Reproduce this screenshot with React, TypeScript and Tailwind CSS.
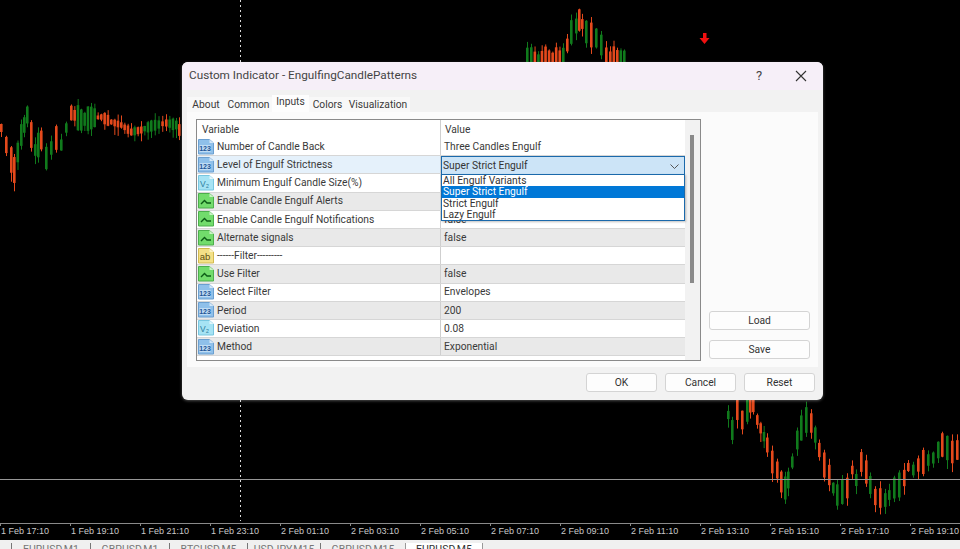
import React from "react";

type K = [number, number];
const segs: K[][] = [
  [[0,128],[5,145],[10,160],[13,170],[20,135],[26,115],[30,135],[34,150],[40,140],[45,158],[50,148],[55,138],[60,145],[65,128],[70,113],[80,120],[90,118],[100,117],[110,122],[120,125],[130,132],[140,130],[150,126],[165,123],[175,125],[181,135]],
  [[526,60],[530,59],[562,60],[566,45],[570,32],[575,26],[578,20],[581,24],[585,32],[590,35],[595,38],[600,45],[605,55],[609,59],[623,60],[628,60]],
  [[727,415],[731,430],[736,410],[741,420],[746,410],[752,402],[756,420],[766,445],[771,462],[776,470],[780,482],[784,488],[787,480],[791,462],[796,440],[800,428],[805,420],[810,423],[814,435],[818,450],[823,465],[828,475],[832,488],[836,495],[841,492],[846,488],[851,470],[855,480],[860,462],[865,472],[869,485],[874,497],[879,498],[884,500],[888,495],[893,488],[898,485],[903,478],[907,467],[912,470],[917,465],[922,462],[927,460],[932,458],[937,450],[941,445],[946,448],[951,452],[956,450],[960,449]],
];
const rnd = (n: number) => { const s = Math.sin(n * 12.9898) * 43758.5453; return s - Math.floor(s); };
const candles: { x: number; t: number; b: number; wt: number; wb: number; red: boolean }[] = [];
segs.forEach((pts, si) => {
  for (let i = 0; i < pts.length - 1; i++) {
    const [x0, y0] = pts[i]; const [x1, y1] = pts[i + 1];
    const n = Math.max(1, Math.round((x1 - x0) / 3.5));
    for (let j = 0; j < n; j++) {
      const x = x0 + ((x1 - x0) * j) / n;
      const y = y0 + ((y1 - y0) * j) / n;
      const seed = x + si * 7.3;
      const flat = si === 0 && x > 95;
      const h = flat ? 3 + rnd(seed) * 9 : 8 + rnd(seed) * 18;
      const red = y1 > y0 ? rnd(seed + 1) > 0.3 : rnd(seed + 1) > 0.7;
      candles.push({ x, t: y - h / 2, b: y + h / 2, wt: y - h / 2 - rnd(seed + 2) * 7, wb: y + h / 2 + rnd(seed + 3) * 9, red });
    }
  }
});

function Chart() {
  return (
    <svg className="w-full h-full block" viewBox="0 0 960 523" width="960" height="523">
      {candles.map((c, i) => (
        <g key={i} fill={c.red ? "#e4491c" : "#107a1c"}>
          <rect x={c.x + 1} y={c.wt} width={1} height={c.wb - c.wt} />
          <rect x={c.x} y={c.t} width={2.6} height={c.b - c.t} />
        </g>
      ))}
      <line x1="0" y1="479.500" x2="960" y2="479.500" stroke="#979797" strokeWidth="1" />
      <line x1="240.500" y1="0" x2="240.500" y2="521" stroke="#d8d8d8" strokeWidth="1" strokeDasharray="2 3" />
      <path d="M703 33h3.500v5h3l-5 6-5-6h3.500z" fill="#f01010" />
    </svg>
  );
}

function Icon({ kind }: { kind: "n" | "v" | "b" | "a" }) {
  const c = {
    n: { f: "#8fc0ea", s: "#6a9fd0", fold: "#d5e8f8" },
    v: { f: "#a6e3f4", s: "#77c6e0", fold: "#e2f6fb" },
    b: { f: "#72dc6c", s: "#4cae4c", fold: "#cbf3c6" },
    a: { f: "#f4e187", s: "#d2b94f", fold: "#fbf3c8" },
  }[kind];
  return (
    <svg width="16" height="16" viewBox="0 0 16 16" className="shrink-0">
      <path d="M0.500 0.500h11l4 3.500v11h-15z" fill={c.f} stroke={c.s} />
      <path d="M11.500 0.500v3.500h4z" fill={c.fold} />
      {kind === "n" && <rect x="1.500" y="6" width="11" height="7" fill="#eaf3fb" opacity="0.55" />}
      {kind === "n" && <text x="7" y="12" fontSize="7" fontWeight="700" textAnchor="middle" fill="#1c5596" fontFamily="Liberation Sans">123</text>}
      {kind === "v" && <text x="6.500" y="11.500" fontSize="8.500" textAnchor="middle" fill="#2d7ea0" fontFamily="Liberation Sans">V₂</text>}
      {kind === "a" && <text x="7" y="12" fontSize="9.500" textAnchor="middle" fill="#5e500f" fontFamily="Liberation Sans">ab</text>}
      {kind === "b" && <path d="M3 11 6.500 7.500l2.500 2.500h4" fill="none" stroke="#0c5c16" strokeWidth="1.400" />}
    </svg>
  );
}

const rows: { k: "n" | "v" | "b" | "a"; name: string; value: string; gray?: boolean; sel?: boolean }[] = [
  { k: "n", name: "Number of Candle Back", value: "Three Candles Engulf" },
  { k: "n", name: "Level of Engulf Strictness", value: "", sel: true },
  { k: "v", name: "Minimum Engulf Candle Size(%)", value: "" },
  { k: "b", name: "Enable Candle Engulf Alerts", value: "", gray: true },
  { k: "b", name: "Enable Candle Engulf Notifications", value: "false" },
  { k: "b", name: "Alternate signals", value: "false", gray: true },
  { k: "a", name: "------Filter---------", value: "" },
  { k: "b", name: "Use Filter", value: "false", gray: true },
  { k: "n", name: "Select Filter", value: "Envelopes" },
  { k: "n", name: "Period", value: "200", gray: true },
  { k: "v", name: "Deviation", value: "0.08" },
  { k: "n", name: "Method", value: "Exponential", gray: true },
];

const btn = "h-[19px] rounded-[3px] bg-[#fdfdfd] border border-[#d4d4d4] text-[#333] flex items-center justify-center text-[10.250px]";

function Dialog() {
  return (
    <div className="absolute left-[182px] top-[62px] w-[641px] h-[338px] rounded-[6px] overflow-hidden bg-[#f2f2f2] flex flex-col text-[#3a3a3a] text-[10.250px] shadow-[0_1px_3px_rgba(255,255,255,0.3)] font-['Roboto',sans-serif]">
      <div className="h-[28px] shrink-0 bg-[#f6eff8] flex items-center pl-[7px] text-[11.750px] text-[#444]">
        <span>Custom Indicator - EngulfingCandlePatterns</span>
        <span className="ml-auto w-[20px] text-center text-[13px] mr-[26px]">?</span>
        <svg width="12" height="12" viewBox="0 0 12 12" className="mr-[16px]"><path d="M1 1l10 10M11 1 1 11" stroke="#333" strokeWidth="1.100" /></svg>
      </div>
      <div className="flex-1 flex flex-col px-[5px] pt-[6px] min-h-0">
        <div className="h-[16px] shrink-0 flex items-end leading-[15px]">
          <span className="h-[15px] w-[38px] text-center bg-[#f8f8f8]">About</span>
          <span className="h-[15px] w-[47px] text-center bg-[#f8f8f8]">Common</span>
          <span className="h-[17px] w-[37px] text-center bg-[#fdfdfd] leading-[14px]">Inputs</span>
          <span className="h-[15px] w-[37px] text-center bg-[#f8f8f8]">Colors</span>
          <span className="h-[15px] w-[64px] text-center bg-[#f8f8f8]">Visualization</span>
        </div>
        <div className="h-[255px] shrink-0 bg-[#fbfbfb] flex pt-[7px] pl-[9px]">
          <div className="relative w-[505px] h-[242px] border border-[#8a8a8a] bg-white flex overflow-hidden">
            <div className="w-[488px] flex flex-col">
              <div className="h-[18px] shrink-0 flex items-center">
                <div className="w-[243px] pl-[5px] pt-px h-full flex items-center">Variable</div>
                <div className="flex-1 pl-[4px] pt-px h-full flex items-center border-l border-[#cfcfcf]">Value</div>
              </div>
              {rows.map((r) => (
                <div key={r.name} className={`h-[18.200px] shrink-0 flex items-center border-b border-[#d6d6d6] ${r.sel ? "bg-[#e5f1fb]" : r.gray ? "bg-[#e9e9e9]" : "bg-white"}`}>
                  <div className="w-[243px] pl-[1px] flex items-center gap-[3px] h-full whitespace-nowrap">
                    <Icon kind={r.k} />
                    <span>{r.name}</span>
                  </div>
                  <div className="flex-1 pl-[3px] h-full flex items-center border-l border-[#cfcfcf] whitespace-nowrap">{r.value}</div>
                </div>
              ))}
              <div className="h-[4px] bg-white" />
            </div>
            <div className="w-[15px] bg-[#f2f2f2] relative">
              <div className="absolute left-[5px] top-[15px] w-[4px] h-[148px] bg-[#8a8a8a]" />
            </div>
            <div className="absolute left-[244px] top-[36px] w-[244px] h-[19px] bg-[#cce4f7] border border-[#1a69ab] flex items-center pl-[1px] text-[#333]">
              Super Strict Engulf
              <svg width="9" height="5" viewBox="0 0 9 5" className="absolute right-[5px] top-[7px]"><path d="M.5.5l4 4 4-4" fill="none" stroke="#555" /></svg>
            </div>
            <div className="absolute left-[244px] top-[54px] w-[244px] h-[47px] bg-white border border-[#1a69ab] text-[#333] leading-[11.700px] flex flex-col shadow-[1px_1px_2px_rgba(0,0,0,0.25)]">
              <div className="h-[11.700px] pl-[1px] overflow-hidden whitespace-nowrap">All Engulf Variants</div>
              <div className="h-[11.700px] pl-[1px] bg-[#0078d7] text-white overflow-hidden whitespace-nowrap">Super Strict Engulf</div>
              <div className="h-[11.700px] pl-[1px] overflow-hidden whitespace-nowrap">Strict Engulf</div>
              <div className="h-[11.700px] pl-[1px] overflow-hidden whitespace-nowrap">Lazy Engulf</div>
            </div>
          </div>
          <div className="w-[101px] ml-[8px] flex flex-col justify-end gap-[10px] pb-[8px]">
            <div className={btn}>Load</div>
            <div className={btn}>Save</div>
          </div>
        </div>
        <div className="flex-1 flex justify-end gap-[8px] pt-[6px] pr-[3px]">
          <div className={`${btn} w-[71px] border-[#5b9bd0]`}>OK</div>
          <div className={`${btn} w-[71px]`}>Cancel</div>
          <div className={`${btn} w-[71px]`}>Reset</div>
        </div>
      </div>
    </div>
  );
}

const times = ["1 Feb 17:10","1 Feb 19:10","1 Feb 21:10","1 Feb 23:10","2 Feb 01:10","2 Feb 03:10","2 Feb 05:10","2 Feb 07:10","2 Feb 09:10","2 Feb 11:10","2 Feb 13:10","2 Feb 15:10","2 Feb 17:10","2 Feb 19:10"];
const tabs: [string, number][] = [["EURUSD,M1", 79],["GBPUSD,M1", 79],["BTCUSD,M5", 78],["USDJPY,M15", 73],["GBPUSD,M15", 85]];

export default function App() {
  return (
    <div className="relative w-[960px] h-[549px] bg-black overflow-hidden flex flex-col">
      <div className="h-[523px] shrink-0"><Chart /></div>
      <div className="h-[17px] shrink-0 border-t border-[#8a8a8a] flex text-[9px] leading-[15px] text-[#c8c8c8] font-['Liberation_Sans',sans-serif]">
        {times.map((t) => (
          <div key={t} className="w-[70px] shrink-0 pl-[1px] whitespace-nowrap relative">
            <span className="absolute left-0 top-0 w-px h-[2px] bg-[#8a8a8a]" />
            <span>{t}</span>
          </div>
        ))}
      </div>
      <div className="flex-1 bg-[#f0f0f0] flex pl-[11px] text-[10.500px] text-[#777] leading-[14px] font-['Roboto',sans-serif] overflow-hidden">
        {tabs.map(([t, w]) => (
          <div key={t} style={{ width: w }} className="text-center border-l border-[#777] h-[6px] mt-[3px]">{t}</div>
        ))}
        <div className="w-[78px] bg-white text-center text-[#333] mt-[3px] border-x border-[#999]">EURUSD,M5</div>
      </div>
      <Dialog />
    </div>
  );
}
